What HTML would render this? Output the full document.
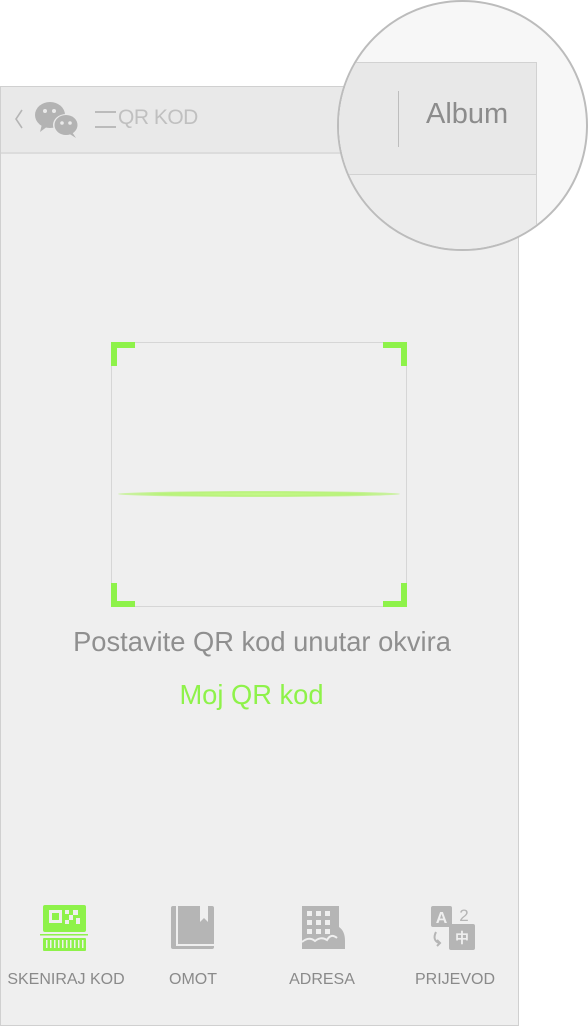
<!DOCTYPE html>
<html><head><meta charset="utf-8"><style>
*{margin:0;padding:0;box-sizing:border-box}
body{width:588px;height:1008px;background:#fff;position:relative;overflow:hidden;font-family:"Liberation Sans",sans-serif}
.a{position:absolute}
.phone{left:0;top:86px;width:519px;height:940px;background:#efefef;border:1px solid #d0d0d0}
.hdr{left:1px;top:87px;width:517px;height:67px;background:#e9e9e9;border-bottom:2px solid #dcdcdc}
.g{background:#8ef24a}
.lbl{font-size:16px;color:#8a8a8a;top:971px;width:140px;text-align:center}
</style></head><body>
<div class="a phone"></div>
<div class="a hdr"></div>
<svg class="a" style="left:12px;top:106px" width="14" height="26"><path d="M10 4 L4 13 L10 22" fill="none" stroke="#b5b5b5" stroke-width="1.6"/></svg>
<svg class="a" style="left:34px;top:100px" width="48" height="40">
<ellipse cx="16" cy="15" rx="15" ry="13" fill="#b3b3b3"/><path d="M8 24 L6 32 L14 26Z" fill="#b3b3b3"/>
<ellipse cx="32" cy="25" rx="13" ry="11" fill="#eaeaea"/>
<ellipse cx="32" cy="25" rx="11.5" ry="10" fill="#b3b3b3"/><path d="M38 32 L42 38 L34 33Z" fill="#b3b3b3"/>
<circle cx="11" cy="11" r="2" fill="#eaeaea"/><circle cx="20" cy="11" r="2" fill="#eaeaea"/>
<circle cx="28" cy="23" r="1.8" fill="#eaeaea"/><circle cx="36" cy="23" r="1.8" fill="#eaeaea"/>
</svg>
<div class="a" style="left:95px;top:111px;width:21px;height:2px;background:#bbb"></div>
<div class="a" style="left:95px;top:126px;width:21px;height:2px;background:#bbb"></div>
<div class="a" style="left:118px;top:106px;font-size:21px;color:#c0c0c0;letter-spacing:-0.5px">QR KOD</div>

<div class="a" style="left:111px;top:342px;width:296px;height:265px;border:1px solid #d6d6d6"></div>
<div class="a g" style="left:111px;top:342px;width:24px;height:6px"></div>
<div class="a g" style="left:111px;top:342px;width:6px;height:24px"></div>
<div class="a g" style="left:383px;top:342px;width:24px;height:6px"></div>
<div class="a g" style="left:401px;top:342px;width:6px;height:24px"></div>
<div class="a g" style="left:111px;top:601px;width:24px;height:6px"></div>
<div class="a g" style="left:111px;top:583px;width:6px;height:24px"></div>
<div class="a g" style="left:383px;top:601px;width:24px;height:6px"></div>
<div class="a g" style="left:401px;top:583px;width:6px;height:24px"></div>
<div class="a" style="left:118px;top:491px;width:282px;height:6px;border-radius:50%;background:radial-gradient(ellipse at center,#c6f98a 0%,#b8f27a 50%,rgba(200,245,150,0) 100%)"></div>

<div class="a" style="left:0;width:524px;top:626px;text-align:center;font-size:27.3px;color:#8f8f8f">Postavite QR kod unutar okvira</div>
<div class="a" style="left:0;width:503px;top:679px;text-align:center;font-size:27.3px;color:#8ef24a">Moj QR kod</div>

<svg class="a" style="left:40px;top:905px" width="48" height="46">
<rect x="3" y="0" width="43" height="27" rx="2" fill="#8ef24a"/>
<rect x="9" y="5" width="13" height="13" fill="#efefef"/><rect x="12" y="8" width="7" height="7" fill="#8ef24a"/>
<rect x="25" y="5" width="4" height="4" fill="#efefef"/><rect x="33" y="5" width="5" height="5" fill="#efefef"/>
<rect x="29" y="10" width="4" height="5" fill="#efefef"/><rect x="25" y="15" width="4" height="4" fill="#efefef"/><rect x="36" y="13" width="4" height="6" fill="#efefef"/>
<rect x="0" y="29" width="48" height="1.5" fill="#8ef24a"/>
<rect x="3" y="33" width="43" height="13" rx="1" fill="#8ef24a"/>
<g fill="#efefef"><rect x="6" y="35" width="1.5" height="8"/><rect x="10" y="35" width="1.5" height="8"/><rect x="14" y="35" width="1.5" height="8"/><rect x="18" y="35" width="1.5" height="8"/><rect x="22" y="35" width="1.5" height="8"/><rect x="26" y="35" width="1.5" height="8"/><rect x="30" y="35" width="1.5" height="8"/><rect x="34" y="35" width="1.5" height="8"/><rect x="38" y="35" width="1.5" height="8"/><rect x="42" y="35" width="1.5" height="8"/></g>
</svg>
<svg class="a" style="left:170px;top:905px" width="46" height="46">
<rect x="1" y="1" width="43" height="43" rx="2" fill="#b5b5b5"/><rect x="6" y="1" width="2" height="40" fill="#efefef"/>
<rect x="6" y="39" width="38" height="2" fill="#efefef"/><path d="M30 1 V17 L34 13 L38 17 V1Z" fill="#efefef"/>
</svg>
<svg class="a" style="left:301px;top:905px" width="46" height="46">
<path d="M1 1 H38 V22 Q44 26 44 36 V44 H1Z" fill="#b5b5b5"/>
<g fill="#efefef"><rect x="6" y="6" width="5" height="5"/><rect x="15" y="6" width="5" height="5"/><rect x="24" y="6" width="5" height="5"/><rect x="6" y="15" width="5" height="5"/><rect x="15" y="15" width="5" height="5"/><rect x="24" y="15" width="5" height="5"/><rect x="6" y="24" width="5" height="5"/><rect x="15" y="24" width="5" height="5"/><rect x="24" y="24" width="5" height="5"/></g>
<path d="M1 37 Q8 31 14 36 Q20 31 26 35 Q30 28 36 33" fill="none" stroke="#efefef" stroke-width="2"/>
</svg>
<svg class="a" style="left:430px;top:905px" width="46" height="46">
<rect x="1" y="1" width="21" height="21" rx="2" fill="#b5b5b5"/>
<text x="11.5" y="18" font-size="16" font-weight="bold" fill="#efefef" text-anchor="middle" font-family="Liberation Sans">A</text>
<text x="34" y="16" font-size="17" fill="#b5b5b5" text-anchor="middle" font-family="Liberation Sans">2</text>
<rect x="19" y="19" width="26" height="26" rx="2" fill="#b5b5b5"/>
<text x="32" y="38" font-size="14" font-weight="bold" fill="#efefef" text-anchor="middle" font-family="Noto Sans CJK SC,sans-serif">中</text>
<path d="M6 27 Q2 35 9 38 M7 35 L10 38 L7 41" fill="none" stroke="#b5b5b5" stroke-width="2"/>
</svg>
<div class="a lbl" style="left:-4px">SKENIRAJ KOD</div>
<div class="a lbl" style="left:123px">OMOT</div>
<div class="a lbl" style="left:252px">ADRESA</div>
<div class="a lbl" style="left:385px">PRIJEVOD</div>

<div class="a" style="left:337px;top:0;width:251px;height:251px;border-radius:50%;border:2px solid #bcbcbc;background:#f7f7f7;overflow:hidden">
  <div class="a" style="left:-10px;top:60px;width:208px;height:260px;background:#ececec;border:1px solid #d2d2d2"></div>
  <div class="a" style="left:-10px;top:61px;width:207px;height:112px;background:#e8e8e8;border-bottom:1px solid #d2d2d2"></div>
  <div class="a" style="left:59px;top:89px;width:1px;height:56px;background:#bdbdbd"></div>
  <div class="a" style="left:87px;top:96px;font-size:29px;color:#8c8c8c">Album</div>
</div>
</body></html>
